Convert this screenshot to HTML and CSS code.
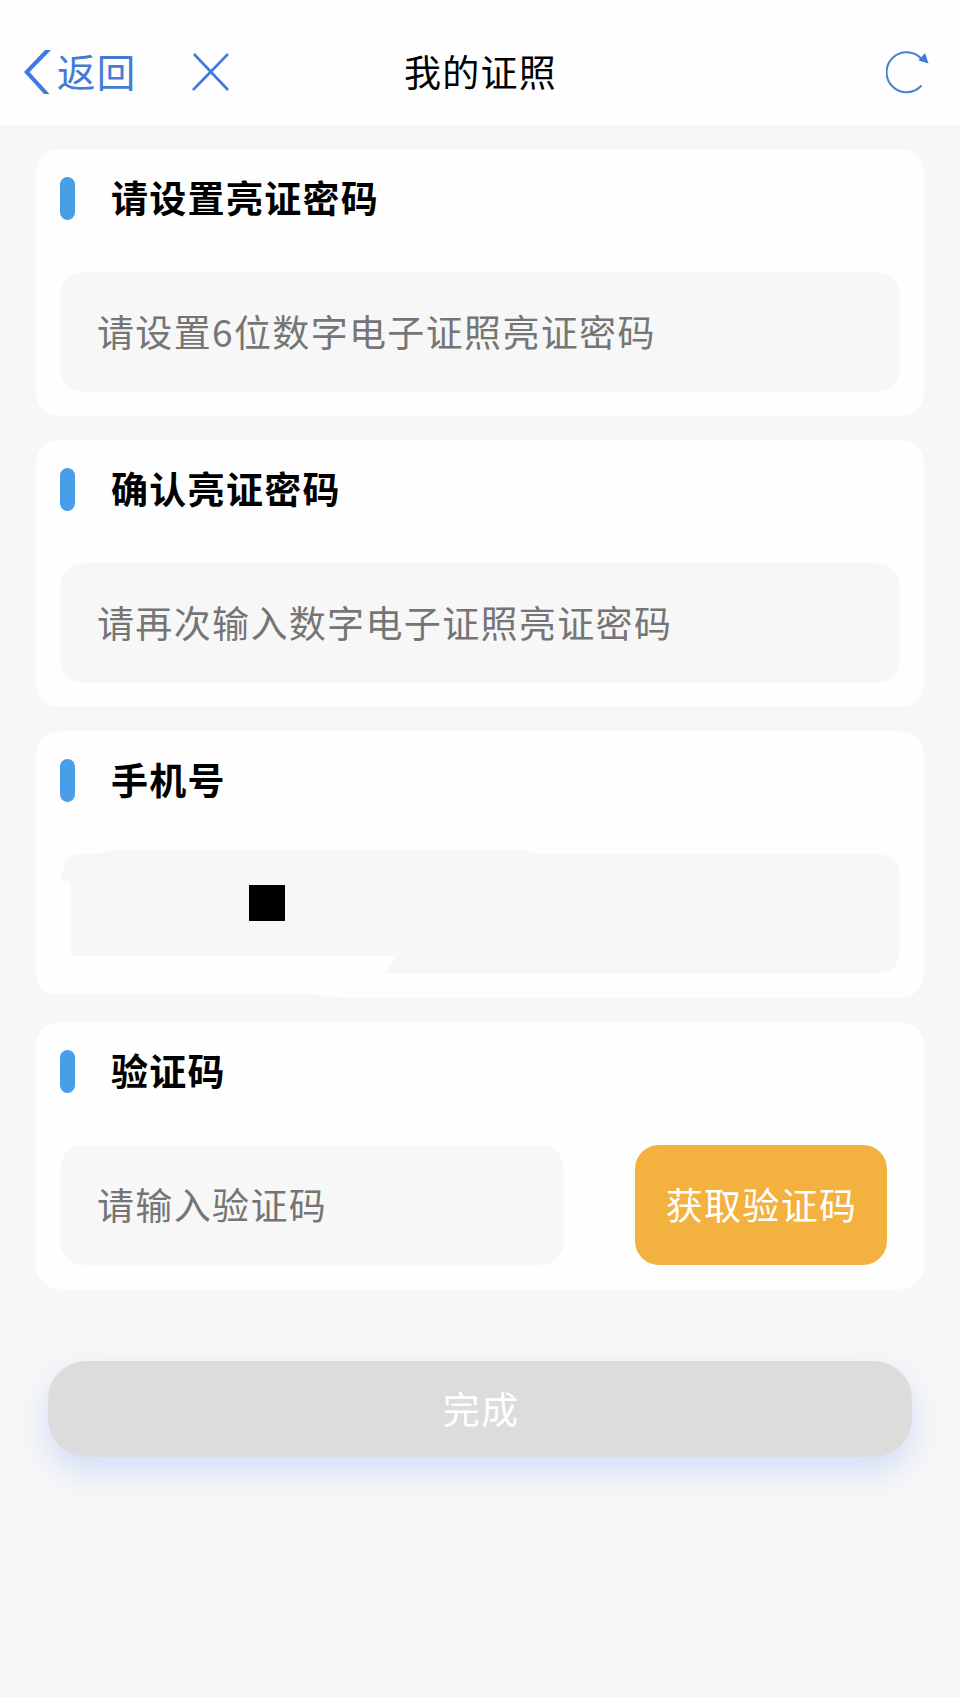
FILE: index.html
```html
<!DOCTYPE html>
<html lang="zh-CN">
<head>
    <meta charset="UTF-8">
    <meta name="viewport" content="width=device-width, initial-scale=1.0">
    <title>我的证照</title>
    <link rel="stylesheet" href="styles.css">
</head>
<body>
    <header class="header">
        <div class="header-left">
            <a class="back" href="#">
                <svg width="28" height="44" viewBox="0 0 28 44"><path d="M21 0H27L5.500 22L25.500 44H20L0 22Z" fill="#3f7ae4"/></svg>
                <span>返回</span>
            </a>
            <a class="close" href="#">
                <svg width="38" height="38" viewBox="0 0 38 38"><path d="M2 1L36 37M36 1L1 37" fill="none" stroke="#3f7ae0" stroke-width="2.600"/></svg>
            </a>
        </div>
        <h1>我的证照</h1>
        <a class="refresh" href="#">
            <svg width="44" height="44" viewBox="0 0 44 44">
                <path d="M36 9.500A20 20 0 1 0 35.500 35.500" fill="none" stroke="#4a80d2" stroke-width="2"/>
                <path d="M39 3L42.500 13.500L32.500 10.500Z" fill="#3f78d6"/>
            </svg>
        </a>
    </header>

    <form class="form">
        <section class="card">
            <h2>请设置亮证密码</h2>
            <input type="text" placeholder="请设置6位数字电子证照亮证密码">
        </section>

        <section class="card">
            <h2>确认亮证密码</h2>
            <input type="text" placeholder="请再次输入数字电子证照亮证密码">
        </section>

        <section class="card card-phone">
            <h2>手机号</h2>
            <div class="phone"><span class="mask"></span></div>
        </section>

        <section class="card">
            <h2>验证码</h2>
            <div class="code-row">
                <input type="text" placeholder="请输入验证码">
                <button type="button" class="code-btn">获取验证码</button>
            </div>
        </section>

        <button type="button" class="submit-btn">完成</button>
    </form>
</body>
</html>
```
FILE: styles.css
```css
* {
    box-sizing: border-box;
}

body {
    margin: 0;
    min-height: 1697px;
    background-color: #f7f7f7;
    font-family: "Noto Sans CJK SC", sans-serif;
    font-size: 37px;
    letter-spacing: 1.3px;
    color: #000;
}

.header {
    display: grid;
    grid-template-columns: 1fr auto 1fr;
    align-items: center;
    height: 125px;
    padding: 19px 30px 0 24px;
    background-color: #fefefe;
}

.header-left,
.back {
    display: flex;
    align-items: center;
}

.header a {
    color: #447bd4;
    text-decoration: none;
}

.header svg {
    display: block;
}

.header h1 {
    margin: 0;
    padding: 0 0 3px 7px;
    font-size: 37px;
    font-weight: 400;
    line-height: 54px;
}

.back span {
    padding: 0 0 5px 5px;
    font-size: 38.5px;
    line-height: 54px;
}

.close {
    margin-left: 55px;
}

.refresh {
    justify-self: end;
}

.form {
    display: flex;
    flex-direction: column;
    gap: 24px;
    padding: 24px 36px;
}

.card {
    height: 267px;
    padding: 24px;
    background-color: #fefefe;
    border-radius: 24px;
}

.card h2 {
    display: flex;
    align-items: center;
    gap: 36px;
    height: 48px;
    margin: 0 0 51px;
    font-size: 37px;
    font-weight: 700;
}

/* 标题左侧蓝色竖条 */
.card h2::before {
    content: "";
    width: 15px;
    height: 43px;
    margin-top: 2px;
    border-radius: 8px;
    background-color: #489fe8;
}

input {
    display: block;
    width: 100%;
    height: 120px;
    padding: 0 37px 3px;
    border: none;
    border-radius: 24px;
    outline: none;
    background-color: #f7f7f7;
    font: inherit;
    letter-spacing: 1.35px;
}

input::placeholder {
    color: #757575;
}

button {
    border: none;
    font: inherit;
    letter-spacing: inherit;
    color: #fff;
}

/* 手机号已遮盖 */
.card-phone {
    position: relative;
}

.card-phone::after {
    content: "";
    position: absolute;
    left: 0;
    bottom: 0;
    width: 310px;
    height: 5px;
    background-color: #f7f7f7;
    clip-path: polygon(0 0, 260px 0, 100% 100%, 0 100%);
}

.phone {
    height: 123px;
    margin-top: -55px;
    padding: 35px 0 0 188.5px;
    background-color: #f7f7f7;
    clip-path: path("M0 31L6 11Q10 4 20 4L42 3L50 0H465L480 4H816Q840 4 840 28V99Q840 123 816 123H324L336 106H11V31Z");
}

.card-phone h2 {
    margin-bottom: 102px;
}

.mask {
    display: block;
    width: 36px;
    height: 36px;
    background-color: #000;
}

.code-row {
    display: flex;
    gap: 71px;
}

.code-row input {
    width: 504px;
}

.code-btn {
    width: 252px;
    height: 120px;
    padding: 0 0 3px 1px;
    border-radius: 24px;
    background-color: #f3b140;
}

.submit-btn {
    height: 96px;
    margin: 48px 12px 0;
    padding: 0 0 3px 2px;
    border-radius: 38px;
    background-color: #dcdcdc;
    box-shadow: 0 14px 32px rgba(80, 130, 255, 0.22);
}
```
